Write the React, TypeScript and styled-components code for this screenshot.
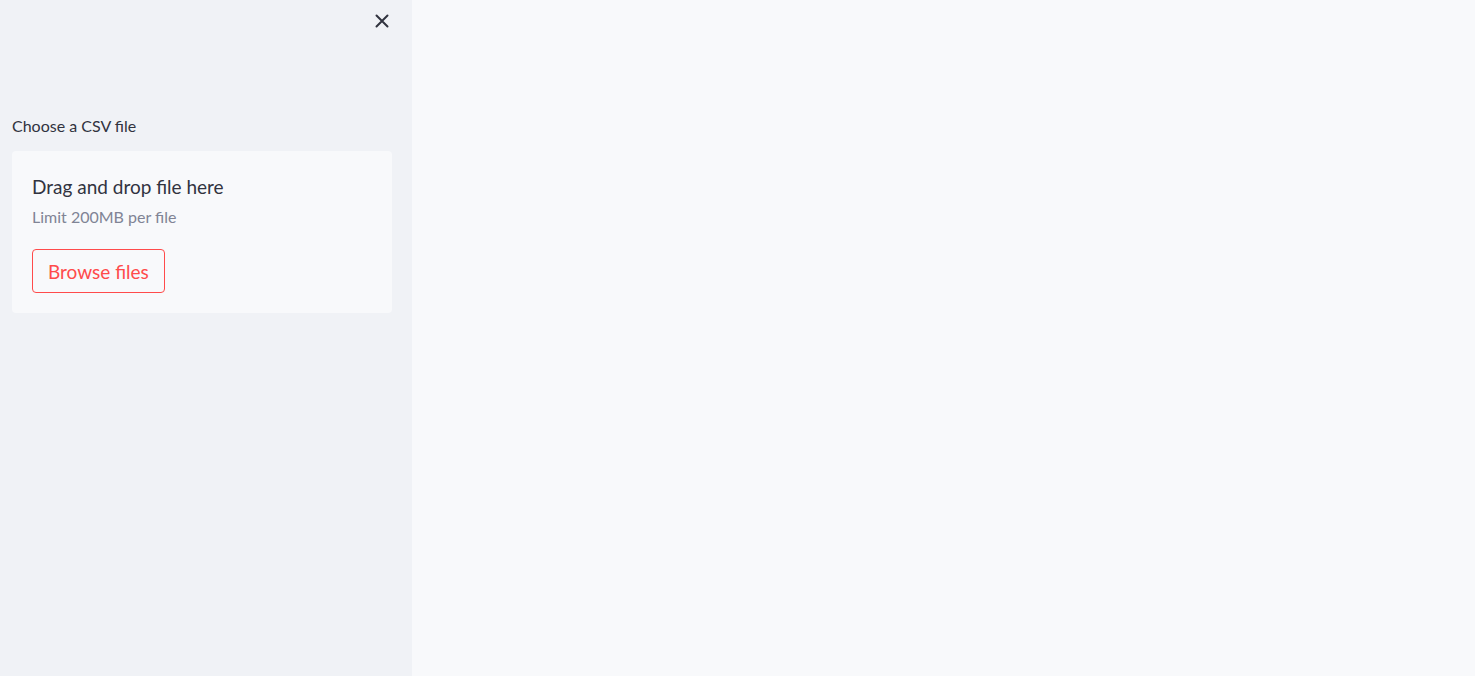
import React from "react";
import styled, { createGlobalStyle } from "styled-components";

const Global = createGlobalStyle`
  html, body { margin: 0; padding: 0; height: 100%; }
  body { font-family: "Source Sans Pro", Lato, "Noto Sans", sans-serif; background: #f8f9fb; color: #31333f; }
  #root { height: 100%; }
`;

const Page = styled.div`
  display: flex;
  width: 100%;
  height: 676px;
`;

const Sidebar = styled.aside`
  width: 412px;
  flex: 0 0 412px;
  background: #f0f2f6;
  display: flex;
  flex-direction: column;
  padding: 0 20px 0 12px;
  box-sizing: border-box;
`;

const SidebarHeader = styled.div`
  display: flex;
  justify-content: flex-end;
  height: 42px;
  align-items: center;
  margin-right: -4px;
`;

const CloseButton = styled.button`
  border: none;
  background: transparent;
  padding: 4px;
  display: flex;
  cursor: pointer;
  color: #31333f;
`;

const Label = styled.label`
  margin-top: 74px;
  font-size: 16px;
  line-height: 20px;
  color: #31333f;
  margin-bottom: 15px;
`;

const Dropzone = styled.section`
  background: #f8f9fb;
  border-radius: 4px;
  padding: 24px 20px 20px 20px;
  display: flex;
  flex-direction: column;
  align-items: flex-start;
`;

const DropTitle = styled.span`
  font-size: 19px;
  line-height: 24px;
  color: #31333f;
`;

const DropLimit = styled.small`
  font-size: 16px;
  line-height: 20px;
  color: #808495;
  margin-top: 8px;
`;

const BrowseButton = styled.button`
  margin-top: 22px;
  height: 44px;
  padding: 0 15px;
  border: 1px solid #ff4b4b;
  border-radius: 4px;
  background: #f8f9fb;
  color: #ff4b4b;
  font-family: inherit;
  font-size: 19px;
  cursor: pointer;
`;

const Main = styled.main`
  flex: 1;
  background: #f8f9fb;
`;

export default function App() {
  return (
    <>
      <Global />
      <Page>
        <Sidebar>
          <SidebarHeader>
            <CloseButton aria-label="Close sidebar">
              <svg width="20" height="20" viewBox="0 0 20 20" fill="none" stroke="#31333f" strokeWidth="2" strokeLinecap="round">
                <path d="M4.5 4.5 L15.5 15.5 M15.5 4.5 L4.5 15.5" />
              </svg>
            </CloseButton>
          </SidebarHeader>
          <Label>Choose a CSV file</Label>
          <Dropzone>
            <DropTitle>Drag and drop file here</DropTitle>
            <DropLimit>Limit 200MB per file</DropLimit>
            <BrowseButton>Browse files</BrowseButton>
          </Dropzone>
        </Sidebar>
        <Main />
      </Page>
    </>
  );
}
